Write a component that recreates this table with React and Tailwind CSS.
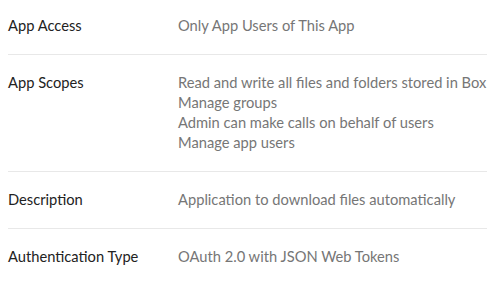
const rows = [
  { label: "App Access", values: ["Only App Users of This App"] },
  {
    label: "App Scopes",
    values: [
      "Read and write all files and folders stored in Box",
      "Manage groups",
      "Admin can make calls on behalf of users",
      "Manage app users",
    ],
  },
  { label: "Description", values: ["Application to download files automatically"] },
  { label: "Authentication Type", values: ["OAuth 2.0 with JSON Web Tokens"] },
];

const App = () => {
  return (
    <div className="w-[496px] h-[283px] overflow-hidden bg-white font-['Lato',sans-serif] text-[14.7px] leading-[20px]">
      <div className="mx-2 w-[479px] -mt-[2px]">
        {rows.map((row, i) => (
          <div
            key={row.label}
            className={`flex pt-[17px] pb-[19px] ${i < rows.length - 1 ? "border-b border-[#e8e8e8]" : ""}`}
          >
            <div className="w-[170px] shrink-0 text-[#222222]">{row.label}</div>
            <div className="flex flex-col whitespace-nowrap text-[#767676]">
              {row.values.map((v) => (
                <span key={v}>{v}</span>
              ))}
            </div>
          </div>
        ))}
      </div>
    </div>
  );
};

export default App;
